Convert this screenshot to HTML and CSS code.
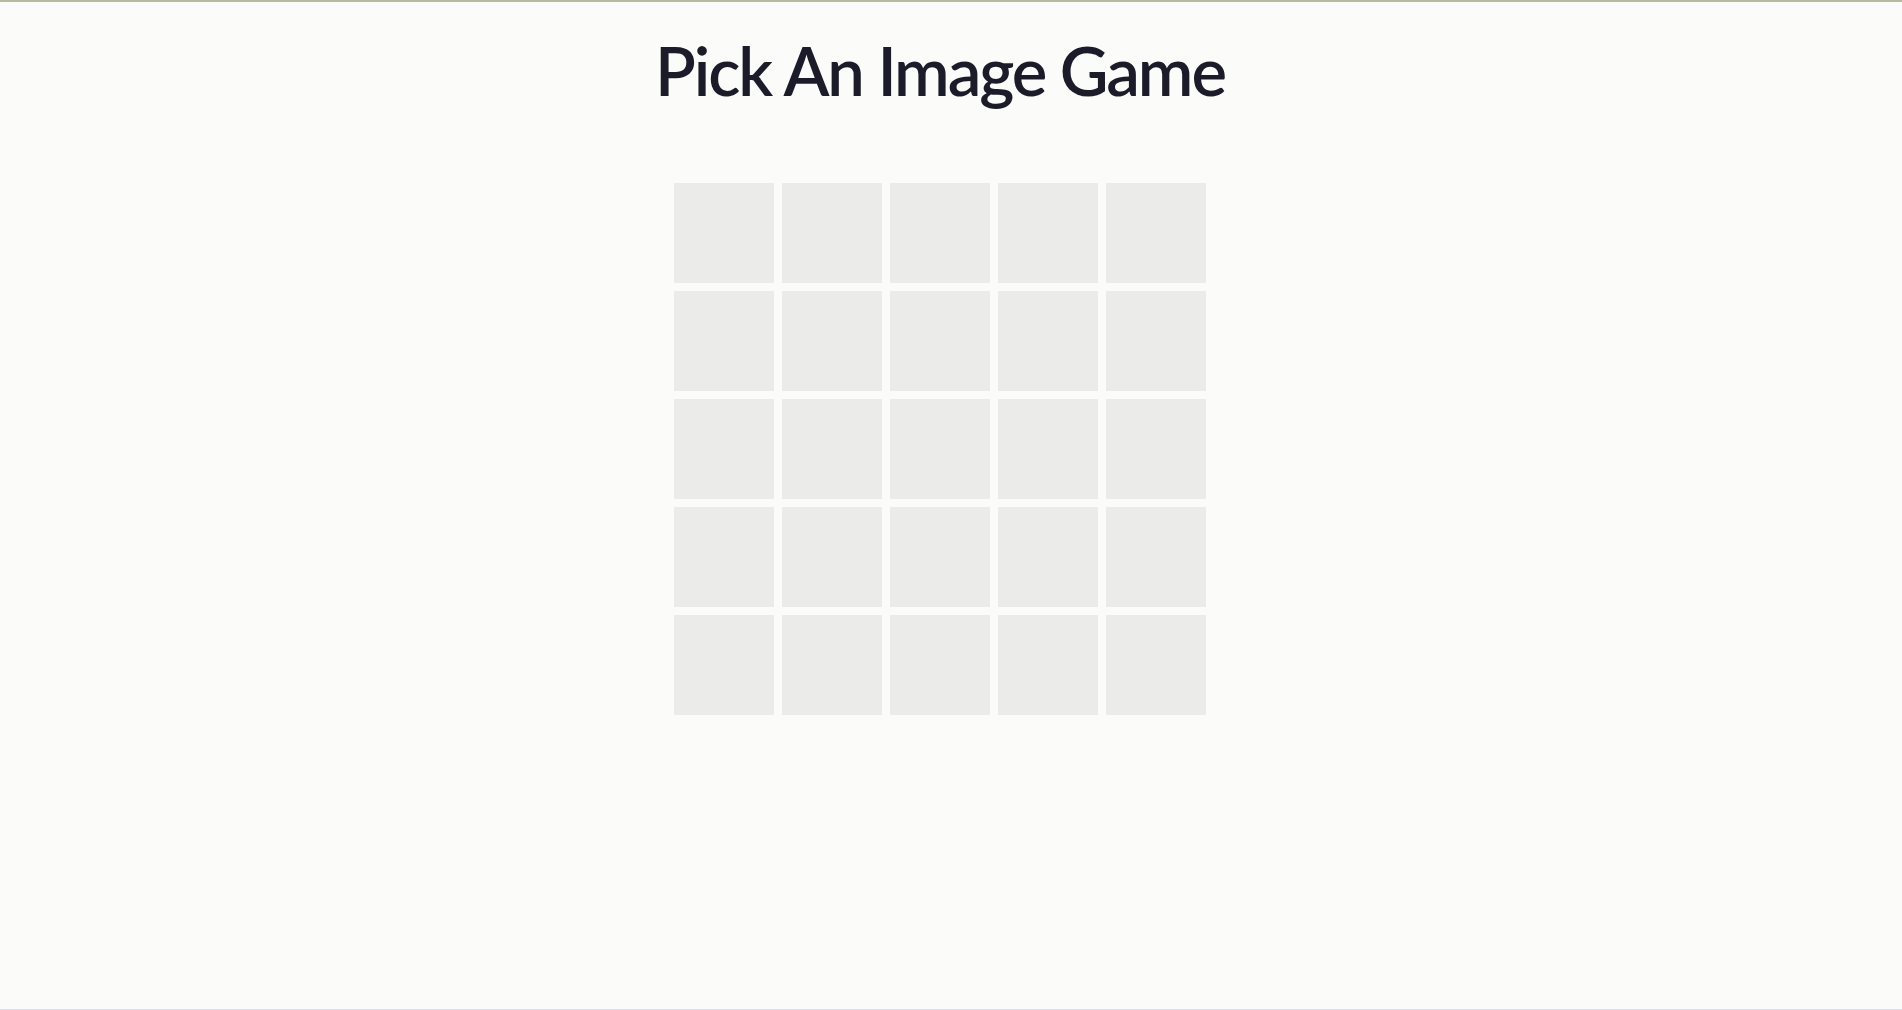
FILE: index.html
```html
<!DOCTYPE html>
<html>
<head>
<meta charset="utf-8">
<link rel="stylesheet" href="styles.css">
<title>Pick An Image Game</title>
</head>
<body>
<div class="page">
  <h1 class="title">Pick An Image Game</h1>
  <div class="board">
    <div class="tile"></div><div class="tile"></div><div class="tile"></div><div class="tile"></div><div class="tile"></div>
    <div class="tile"></div><div class="tile"></div><div class="tile"></div><div class="tile"></div><div class="tile"></div>
    <div class="tile"></div><div class="tile"></div><div class="tile"></div><div class="tile"></div><div class="tile"></div>
    <div class="tile"></div><div class="tile"></div><div class="tile"></div><div class="tile"></div><div class="tile"></div>
    <div class="tile"></div><div class="tile"></div><div class="tile"></div><div class="tile"></div><div class="tile"></div>
  </div>
</div>
</body>
</html>
```

FILE: styles.css
```css
html, body {
  margin: 0;
  padding: 0;
  height: 100%;
}
body {
  background: #fbfbf9;
  border-top: 2px solid #b9b9a2;
  border-bottom: 1px solid #dedef0;
  box-sizing: border-box;
  font-family: Lato, "Open Sans", sans-serif;
  overflow: hidden;
}
.page {
  width: 1880px;
  display: flex;
  flex-direction: column;
  align-items: center;
}
.title {
  margin: 28px 0 0;
  font-size: 67px;
  font-weight: 600;
  letter-spacing: -2.1px;
  line-height: 80px;
  color: #1b1b29;
}
.board {
  margin-top: 73px;
  display: grid;
  grid-template-columns: repeat(5, 100px);
  grid-auto-rows: 100px;
  gap: 8px;
}
.tile {
  background: #ebebea;
}
```
